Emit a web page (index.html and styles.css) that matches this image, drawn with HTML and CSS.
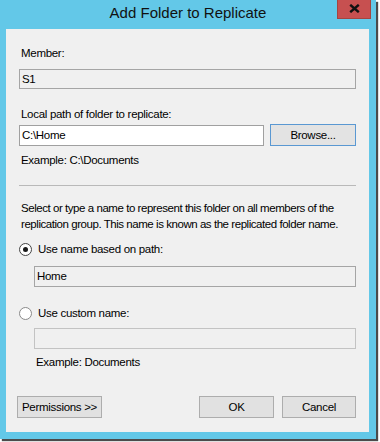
FILE: index.html
```html
<!DOCTYPE html>
<html>
<head>
<meta charset="utf-8">
<link rel="stylesheet" href="styles.css">
</head>
<body>
<div class="window">
  <div class="titlebar">
    <div class="title">Add Folder to Replicate</div>
    <div class="close">
      <svg width="11" height="9" viewBox="0 0 11 9"><path d="M1.2 0.8 L9.8 8.2 M9.8 0.8 L1.2 8.2" stroke="#111" stroke-width="2.4" fill="none"/></svg>
    </div>
  </div>
  <div class="client">
    <div class="label">Member:</div>
    <div class="field readonly member">S1</div>
    <div class="label local">Local path of folder to replicate:</div>
    <div class="pathrow">
      <div class="field editable">C:\Home</div>
      <div class="button browse">Browse...</div>
    </div>
    <div class="label example1">Example: C:\Documents</div>
    <div class="separator"></div>
    <div class="label para">Select or type a name to represent this folder on all members of the<br>replication group. This name is known as the replicated folder name.</div>
    <div class="radiorow first">
      <span class="radio checked"><span class="dot"></span></span>
      <span class="rlabel">Use name based on path:</span>
    </div>
    <div class="field readonly indented home">Home</div>
    <div class="radiorow second">
      <span class="radio"></span>
      <span class="rlabel">Use custom name:</span>
    </div>
    <div class="field disabled indented custom"></div>
    <div class="label example2">Example: Documents</div>
    <div class="buttons">
      <div class="button perms">Permissions &gt;&gt;</div>
      <div class="spacer"></div>
      <div class="button ok">OK</div>
      <div class="button cancel">Cancel</div>
    </div>
  </div>
</div>
</body>
</html>
```
FILE: styles.css
```css
html, body {
  margin: 0;
  padding: 0;
  background: #ffffff;
}
body {
  width: 380px;
  height: 442px;
  overflow: hidden;
}
.window {
  width: 376px;
  height: 439px;
  box-sizing: border-box;
  background: #63c8e8;
  padding: 0 7px 7px 6px;
  display: flex;
  flex-direction: column;
  position: relative;
  box-shadow: 2px 2px 1px rgba(30, 30, 30, 0.8);
}
.titlebar {
  height: 29px;
  flex: none;
}
.title {
  font-family: "Liberation Sans", Arial, sans-serif;
  font-size: 15px;
  line-height: 26px;
  color: #111;
  text-align: center;
  margin-left: -6px;
  margin-right: -7px;
}
.close {
  position: absolute;
  top: 0;
  right: 5px;
  width: 34px;
  height: 19px;
  box-sizing: border-box;
  background: #c75050;
  border: 1px solid #a44540;
  border-top: none;
  display: flex;
  align-items: center;
  justify-content: center;
  padding-bottom: 2px;
}
.close svg { display: block; }
.client {
  flex: 1;
  background: #f0f0f0;
  padding: 18px 13px 14px 13px;
  display: flex;
  flex-direction: column;
  font-family: "Liberation Sans", Arial, sans-serif;
  font-size: 11.5px;
  letter-spacing: -0.3px;
  color: #000;
}
.label {
  line-height: 13px;
  margin-left: 2px;
  white-space: nowrap;
}
.field {
  box-sizing: border-box;
  height: 21px;
  border: 1px solid #a5a5a5;
  padding: 0 2px;
  line-height: 19px;
  white-space: nowrap;
}
.readonly { background: #f0f0f0; }
.editable { background: #ffffff; border-color: #a0a0a0; }
.disabled { background: #f0f0f0; border-color: #c3c3c3; }
.member { margin-top: 9px; height: 20px; line-height: 18px; }
.local { margin-top: 19px; }
.pathrow {
  margin-top: 3px;
  display: flex;
  align-items: flex-start;
  gap: 6px;
}
.pathrow .field {
  flex: 1;
  margin-top: 1px;
}
.button {
  box-sizing: border-box;
  height: 22px;
  background: #e1e1e1;
  border: 1px solid #adadad;
  display: flex;
  align-items: center;
  justify-content: center;
  white-space: nowrap;
}
.browse {
  width: 86px;
  border-color: #5a98d2;
  background: #e3e3e3;
}
.example1 { margin-top: 8px; }
.separator {
  margin-top: 18px;
  height: 1px;
  background: #b9b9b9;
}
.para {
  margin-top: 14px;
  line-height: 16px;
  letter-spacing: -0.45px;
}
.radiorow {
  display: flex;
  align-items: center;
  height: 13px;
  gap: 6px;
}
.radiorow.first { margin-top: 11px; }
.radiorow.second { margin-top: 20px; }
.radio {
  box-sizing: border-box;
  width: 13px;
  height: 13px;
  border-radius: 50%;
  border: 1px solid #8a8a8a;
  background: #ffffff;
  display: flex;
  align-items: center;
  justify-content: center;
  flex: none;
}
.radio.checked { border-color: #444; }
.dot {
  width: 5px;
  height: 5px;
  border-radius: 50%;
  background: #1a1a1a;
}
.rlabel { line-height: 13px; white-space: nowrap; }
.indented { margin-left: 15px; }
.home { margin-top: 10px; }
.custom { margin-top: 8px; }
.example2 { margin-top: 7px; margin-left: 17px; }
.buttons {
  margin-top: auto;
  display: flex;
  gap: 8px;
}
.spacer { flex: 1; }
.perms { width: 85px; margin-left: -2px; }
.ok { width: 75px; }
.cancel { width: 74px; }
```
